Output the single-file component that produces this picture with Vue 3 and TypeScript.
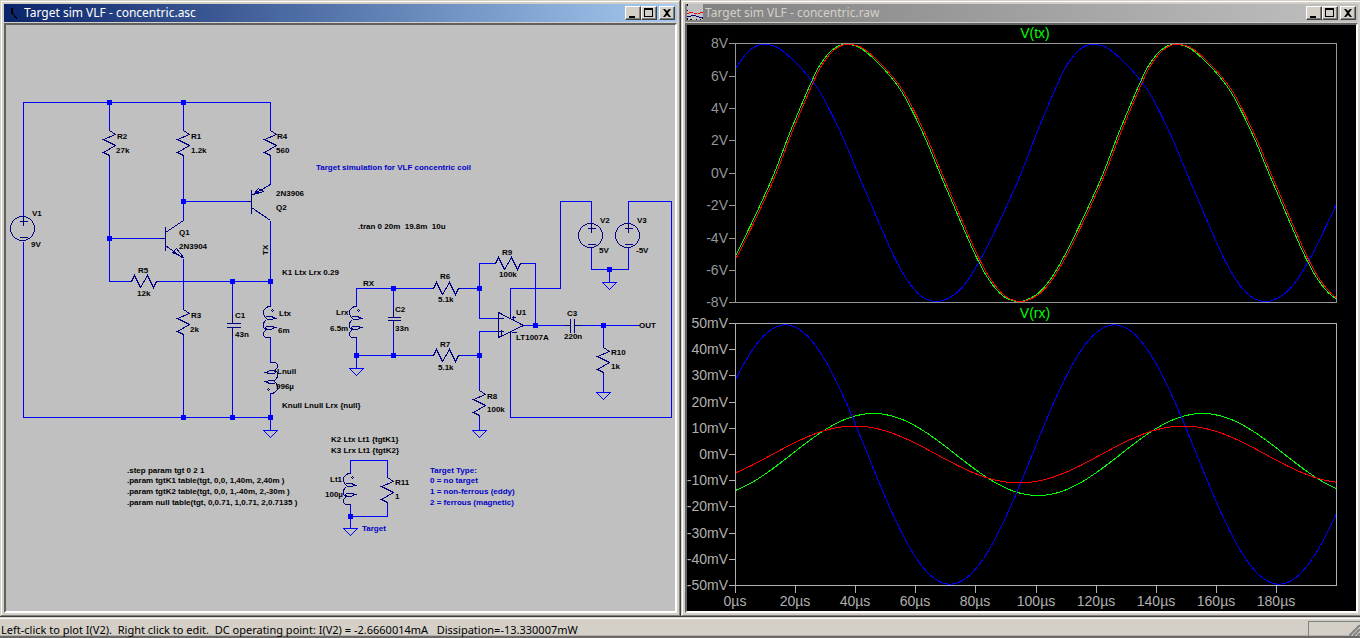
<script setup lang="ts">
type Point = [number, number]
interface Label { x: number; y: number; text: string; note?: boolean }
interface Axis { at: number; text: string }

const wires: string[] = [
  'M23 216V102H270V130', 'M23 241V417H270', 'M109 102V130', 'M109 155V281H131',
  'M183 102V130', 'M183 155V220', 'M183 201H247', 'M109 238H160', 'M156 281H270',
  'M183 258V309', 'M183 334V417', 'M232 281V323', 'M232 327V417', 'M270 155V184',
  'M270 220V306', 'M270 337V362', 'M270 392V430', 'M356 306V288H433', 'M458 288H479',
  'M495 263H479V318H498', 'M520 263H535V325', 'M498 331H479V390', 'M458 355H479',
  'M479 415V430', 'M356 337V368', 'M356 355H433', 'M393 288V317', 'M393 320V355',
  'M510 316V288H560V201H591V223', 'M510 333V417H671V201H628V223', 'M591 247V269H628V247',
  'M609 269V282', 'M523 325H570', 'M575 325H639', 'M603 325V347', 'M603 372V392',
  'M350 473V460H387V477', 'M387 502V516H350', 'M350 504V528',
]
const junctions: Point[] = [
  [109, 102], [183, 102], [183, 201], [109, 238], [232, 281], [270, 281], [183, 417],
  [232, 417], [270, 417], [393, 288], [479, 288], [479, 355], [356, 355], [393, 355],
  [609, 269], [535, 325], [603, 325], [350, 516],
]
const grounds: Point[] = [[270, 430], [356, 368], [479, 430], [609, 282], [603, 392], [350, 528]]
const uprightResistors: Point[] = [[109, 130], [183, 130], [270, 130], [183, 309], [479, 390], [603, 347], [387, 477]]
const flatResistors: Point[] = [[131, 281], [433, 288], [433, 355], [495, 263]]
const sources: Point[] = [[22, 228], [590, 235], [627, 235]]
const coils: string[] = ['translate(270 306)', 'translate(356 306)', 'translate(350 473)', 'translate(270 393) rotate(180)']

const labels: Label[] = [
  { x: 32, y: 216, text: 'V1' }, { x: 31, y: 247, text: '9V' },
  { x: 117, y: 139, text: 'R2' }, { x: 116, y: 153, text: '27k' },
  { x: 191, y: 139, text: 'R1' }, { x: 191, y: 153, text: '1.2k' },
  { x: 277, y: 139, text: 'R4' }, { x: 276, y: 153, text: '560' },
  { x: 276, y: 196, text: '2N3906' }, { x: 276, y: 210, text: 'Q2' },
  { x: 179, y: 235, text: 'Q1' }, { x: 179, y: 249, text: '2N3904' },
  { x: 138, y: 273, text: 'R5' }, { x: 137, y: 296, text: '12k' },
  { x: 191, y: 318, text: 'R3' }, { x: 190, y: 332, text: '2k' },
  { x: 235, y: 318, text: 'C1' }, { x: 235, y: 337, text: '43n' },
  { x: 279, y: 316, text: 'Ltx' }, { x: 278, y: 333, text: '6m' },
  { x: 277, y: 374, text: 'Lnull' }, { x: 276, y: 389, text: '996µ' },
  { x: 282, y: 275, text: 'K1 Ltx Lrx 0.29' }, { x: 282, y: 408, text: 'Knull Lnull Lrx {null}' },
  { x: 316, y: 170, text: 'Target simulation for VLF concentric coil', note: true },
  { x: 358, y: 229, text: '.tran 0 20m  19.8m  10u' },
  { x: 502, y: 255, text: 'R9' }, { x: 499, y: 277, text: '100k' },
  { x: 363, y: 286, text: 'RX' }, { x: 440, y: 279, text: 'R6' }, { x: 438, y: 302, text: '5.1k' },
  { x: 336, y: 315, text: 'Lrx' }, { x: 330, y: 331, text: '6.5m' },
  { x: 395, y: 312, text: 'C2' }, { x: 395, y: 331, text: '33n' },
  { x: 516, y: 315, text: 'U1' }, { x: 516, y: 340, text: 'LT1007A' },
  { x: 567, y: 316, text: 'C3' }, { x: 564, y: 339, text: '220n' },
  { x: 639, y: 328, text: 'OUT' }, { x: 611, y: 355, text: 'R10' }, { x: 611, y: 369, text: '1k' },
  { x: 487, y: 399, text: 'R8' }, { x: 487, y: 412, text: '100k' },
  { x: 440, y: 347, text: 'R7' }, { x: 438, y: 370, text: '5.1k' },
  { x: 600, y: 223, text: 'V2' }, { x: 599, y: 253, text: '5V' },
  { x: 637, y: 223, text: 'V3' }, { x: 636, y: 253, text: '-5V' },
  { x: 331, y: 442, text: 'K2 Ltx Lt1 {tgtK1}' }, { x: 331, y: 453, text: 'K3 Lrx Lt1 {tgtK2}' },
  { x: 330, y: 482, text: 'Lt1' }, { x: 325, y: 497, text: '100µ' },
  { x: 395, y: 485, text: 'R11' }, { x: 395, y: 499, text: '1' },
  { x: 362, y: 531, text: 'Target', note: true },
  { x: 127, y: 473, text: '.step param tgt 0 2 1' },
  { x: 127, y: 483, text: '.param tgtK1 table(tgt, 0,0, 1,40m, 2,40m )' },
  { x: 127, y: 494, text: '.param tgtK2 table(tgt, 0,0, 1,-40m, 2,-30m )' },
  { x: 127, y: 505, text: '.param null table(tgt, 0,0.71, 1,0.71, 2,0.7135 )' },
  { x: 430, y: 473, text: 'Target Type:', note: true },
  { x: 430, y: 483, text: '0 = no target', note: true },
  { x: 430, y: 494, text: '1 = non-ferrous (eddy)', note: true },
  { x: 430, y: 505, text: '2 = ferrous (magnetic)', note: true },
]

const message =
  'Left-click to plot I(V2).  Right click to edit.  DC operating point: I(V2) = -2.6660014mA   Dissipation=-13.330007mW'

const LEFT = 735
const RIGHT = 1336
const PERIOD = 329

const txAxis: Axis[] = [8, 6, 4, 2, 0, -2, -4, -6, -8].map((v) => ({
  at: Math.round(172.7 - v * 16.2), text: `${v}V`,
}))
const rxAxis: Axis[] = [50, 40, 30, 20, 10, 0, -10, -20, -30, -40, -50].map((v) => ({
  at: Math.round(454 - v * 2.62), text: `${v}mV`,
}))
const timeAxis: Axis[] = [0, 20, 40, 60, 80, 100, 120, 140, 160, 180].map((t) => ({
  at: Math.round(LEFT + t * 3.005), text: `${t}µs`,
}))

// One cycle of the coil drive voltage: offset from its crest, height on the plot.
const cycle: Point[] = [
  [-155, 301], [-140, 294], [-127, 280], [-113, 257], [-98, 227], [-88, 206], [-73, 172],
  [-58, 133], [-48, 109], [-39, 88], [-29, 67], [-18, 52], [-8, 45], [0, 44], [12, 47],
  [28, 60], [42, 75], [54, 91], [66, 113], [80, 143], [92, 172], [104, 200], [116, 228],
  [130, 259], [142, 280], [155, 295], [168, 301],
]

function toPath(points: Point[]): string {
  return points.map(([x, y], i) => `${i ? 'L' : 'M'}${x} ${y.toFixed(1)}`).join('')
}

function driveWave(crest: number): string {
  const knots: Point[] = []
  for (let k = -2; k <= 2; k++) {
    for (const [dx, y] of cycle) knots.push([crest + k * PERIOD + dx, y])
  }
  const out: Point[] = []
  let i = 1
  for (let x = LEFT; x <= RIGHT; x++) {
    while (knots[i + 1][0] <= x) i++
    const [p0, p1, p2, p3] = [knots[i - 1], knots[i], knots[i + 1], knots[i + 2]]
    const h = p2[0] - p1[0]
    const t = (x - p1[0]) / h
    const m1 = ((p2[1] - p0[1]) / (p2[0] - p0[0])) * h
    const m2 = ((p3[1] - p1[1]) / (p3[0] - p1[0])) * h
    const y =
      (2 * t ** 3 - 3 * t ** 2 + 1) * p1[1] + (t ** 3 - 2 * t ** 2 + t) * m1 +
      (3 * t ** 2 - 2 * t ** 3) * p2[1] + (t ** 3 - t ** 2) * m2
    out.push([x, y])
  }
  return toPath(out)
}

function sineWave(crest: number, amplitude: number): string {
  const out: Point[] = []
  for (let x = LEFT; x <= RIGHT; x++) {
    out.push([x, 454 - amplitude * Math.cos((2 * Math.PI * (x - crest)) / PERIOD)])
  }
  return toPath(out)
}

const traces = [
  { color: 'lime', d: driveWave(847) },
  { color: 'blue', d: driveWave(765) },
  { color: 'red', d: driveWave(849) },
  { color: 'lime', d: sineWave(873, 41) },
  { color: 'blue', d: sineWave(785, 129.6) },
  { color: 'red', d: sineWave(854, 28.4) },
]
</script>

<template>
  <div class="app">
    <main class="desktop">
      <section class="window" aria-label="Schematic">
        <header class="titlebar active">
          <svg class="icon" viewBox="0 0 16 16" aria-hidden="true">
            <path d="M5 3h2v5h1v2h1v1h1v1h1v2h-1v-1h-1v-1h-1v-2h-1v-1h-2z" fill="#000" />
          </svg>
          <h2 class="title">Target sim VLF - concentric.asc</h2>
          <button class="ctl" type="button" aria-label="Minimize">
            <svg viewBox="0 0 12 10"><path d="M2 8h6v2h-6z" /></svg>
          </button>
          <button class="ctl" type="button" aria-label="Maximize">
            <svg viewBox="0 0 12 10"><path d="M1 0h9v9h-9zM2 2v6h7v-6z" fill-rule="evenodd" /></svg>
          </button>
          <button class="ctl close" type="button" aria-label="Close">
            <svg viewBox="0 0 12 10"><path d="M2 1h2l2 2 2-2h2l-3 4 3 4h-2l-2-2-2 2h-2l3-4z" /></svg>
          </button>
        </header>
        <div class="client">
          <svg class="canvas" viewBox="6 25 669 586" role="img" aria-label="Concentric coil circuit">
            <g class="strokes" transform="translate(.5 .5)">
              <path v-for="d in wires" :key="d" class="wire" :d="d" />
              <path v-for="g in grounds" :key="g.join()" class="wire" :d="`M${g[0] - 7} ${g[1]}h14l-7 7z`" />
              <path
                v-for="r in uprightResistors" :key="r.join()" class="part"
                :d="`M${r[0]} ${r[1] - 2}v2l6 4-12 5 12 6-12 7 6 3v2`"
              />
              <path
                v-for="r in flatResistors" :key="r.join()" class="part"
                :d="`M${r[0] - 2} ${r[1]}h2l3-6 6 12 7-12 6 12 3-6h2`"
              />
              <g v-for="s in sources" :key="s.join()" class="part" :transform="`translate(${s[0]} ${s[1]})`">
                <circle r="12" />
                <path d="M-3-7h8M1-12v9M-3 9h8" />
              </g>
              <g v-for="c in coils" :key="c" class="part" :transform="c">
                <path d="M0 0h-2q-5 2-5 6 0 4 3 6M-7 20v-2q0-3 3-5M-7 20q0 2 3 3-3 2-3 4 0 4 3 4h4" />
                <path d="M-5 11q2-2 6-1l4 2-5 1q-4 0-5-2M-5 21q2-2 6-1l4 1-5 2q-4 0-5-2M2 3l1 1-1 1-1-1z" />
              </g>
              <path class="part" d="M226 323h14M226 327h14M387 317h13M387 320h13M570 318v14M574 318v14M563 325h7M574 325h7" />
              <path class="part" d="M232 313v10M232 327v9M393 309v8M393 320v9" />
              <path class="part" d="M246 201h5M251 189v24M251 195l19-11M251 207l19 13M253 194l5-6 5 3z" />
              <path class="part" d="M160 238h5M165 226v24M165 232l18-12M165 245l18 13M183 257l-11-5 4-4z" />
              <path class="part" d="M498 312v25l25-12zM494 318h9M494 331h9M501 329v5M511 317h4M513 315v4M511 332h5M510 313v5M510 331v6" />
            </g>
            <rect
              v-for="j in junctions" :key="j.join()" class="junction"
              :x="j[0] - 2" :y="j[1] - 2" width="5" height="5"
            />
            <text
              v-for="(l, i) in labels" :key="i" class="label" :class="{ note: l.note }"
              :x="l.x" :y="l.y"
            >{{ l.text }}</text>
            <text class="label" transform="translate(268 255) rotate(-90)">TX</text>
          </svg>
        </div>
      </section>

      <section class="window" aria-label="Waveforms">
        <header class="titlebar">
          <svg class="icon raised" viewBox="0 0 16 16" aria-hidden="true">
            <path d="M0 0h16v16h-16z" fill="#c0c0c0" />
            <path d="M0 0h1v2h-1zM0 6h1v1h-1zM0 14h1v2h-1zM3 15h2v1h-2zM9 15h1v1h-1zM13 15h1v1h-1zM15 13h1v2h-1z" fill="#000" />
            <path d="M0 9h2v1h-2zM2 8h4v1h-4zM7 9h3v1h-3zM11 9h2v1h-2zM13 8h3v1h-3z" fill="#f00" />
            <path d="M0 12h4v1h-4zM4 11h5v1h-5zM9 12h3v1h-3zM12 13h4v1h-4z" fill="#000080" />
          </svg>
          <h2 class="title">Target sim VLF - concentric.raw</h2>
          <button class="ctl" type="button" aria-label="Minimize">
            <svg viewBox="0 0 12 10"><path d="M2 8h6v2h-6z" /></svg>
          </button>
          <button class="ctl" type="button" aria-label="Maximize">
            <svg viewBox="0 0 12 10"><path d="M1 0h9v9h-9zM2 2v6h7v-6z" fill-rule="evenodd" /></svg>
          </button>
          <button class="ctl close" type="button" aria-label="Close">
            <svg viewBox="0 0 12 10"><path d="M2 1h2l2 2 2-2h2l-3 4 3 4h-2l-2-2-2 2h-2l3-4z" /></svg>
          </button>
        </header>
        <div class="client plots">
          <svg class="canvas" viewBox="687 25 669 586" role="img" aria-label="V(tx) and V(rx) against time">
            <g class="strokes" transform="translate(.5 .5)">
              <path v-for="(t, i) in traces" :key="i" :d="t.d" :stroke="t.color" />
              <g class="tx-frame">
                <path d="M735 43H1336V302H735z" />
                <path v-for="a in txAxis" :key="a.text" :d="`M728 ${a.at}h7`" />
              </g>
              <g class="rx-frame">
                <path d="M735 323H1336V585H735z" />
                <path v-for="a in rxAxis" :key="a.text" :d="`M728 ${a.at}h7`" />
                <path v-for="a in timeAxis" :key="a.text" :d="`M${a.at} 585v7`" />
              </g>
            </g>
            <text v-for="a in txAxis" :key="a.text" class="scale tx" x="728" :y="a.at + 5">{{ a.text }}</text>
            <text v-for="a in rxAxis" :key="a.text" class="scale" x="728" :y="a.at + 5">{{ a.text }}</text>
            <text v-for="a in timeAxis" :key="a.text" class="scale time" :x="a.at" y="606">{{ a.text }}</text>
            <text class="scale trace" x="1035" y="38">V(tx)</text>
            <text class="scale trace" x="1035" y="318">V(rx)</text>
          </svg>
        </div>
      </section>
    </main>

    <footer class="statusbar">
      <output class="message">{{ message }}</output>
      <div class="panel">
        <svg class="grip" viewBox="0 0 12 12" aria-hidden="true">
          <path d="M0 12L12 0M4 12L12 4M8 12L12 8" stroke="#fff" />
          <path d="M1 12L12 1M5 12L12 5M9 12L12 9" stroke="#808080" stroke-width="2" />
        </svg>
      </div>
    </footer>
  </div>
</template>

<style>
body {
  margin: 0;
  background: #d4d0c8;
}
</style>

<style scoped>
.app {
  display: flex;
  flex-direction: column;
  min-height: 100vh;
  overflow: hidden;
  background: #d4d0c8;
  font-family: "Noto Sans", "DejaVu Sans", sans-serif;
  font-size: 11px;
}
.desktop {
  display: grid;
  grid-template-columns: 1fr 1fr;
  flex: 1;
  /* the right-hand window hangs over the edge by its outer border */
  margin-right: -2px;
}
.window {
  display: flex;
  flex-direction: column;
  min-width: 0;
  padding: 4px;
  box-shadow:
    inset -1px -1px #404040,
    inset 1px 1px #d4d0c8,
    inset -2px -2px #808080,
    inset 2px 2px #fff;
}
.titlebar {
  display: flex;
  align-items: center;
  height: 18px;
  margin-bottom: 1px;
  padding: 0 2px;
  background: linear-gradient(90deg, #808080, #c0c0c0);
  color: #d4d0c8;
}
.titlebar.active {
  background: linear-gradient(90deg, #0a246a, #a6caf0);
  color: #fff;
}
.icon {
  flex: none;
  width: 16px;
  height: 16px;
  margin-right: 2px;
}
.icon.raised {
  align-self: flex-start;
}
.title {
  flex: 1;
  margin: 0;
  overflow: hidden;
  font-size: 12px;
  font-weight: 400;
  line-height: 18px;
  white-space: pre;
}
.ctl {
  box-sizing: border-box;
  flex: none;
  width: 16px;
  height: 14px;
  padding: 1px;
  border: 1px solid;
  border-color: #fff #404040 #404040 #fff;
  background: #d4d0c8;
  box-shadow: inset -1px -1px #808080;
}
.ctl.close {
  margin-left: 2px;
}
.ctl svg {
  display: block;
  width: 12px;
  height: 10px;
}
.client {
  flex: 1;
  border: 2px solid;
  border-color: #606060 #fff #fff #606060;
  background: #c0c0c0;
}
.plots {
  background: #000;
}
.canvas {
  display: block;
  width: 100%;
  height: auto;
}
.strokes {
  fill: none;
  stroke-width: 1px;
  shape-rendering: crispEdges;
}
.wire {
  stroke: #00f;
}
.part {
  stroke: #000080;
}
.junction {
  fill: #00f;
}
.label {
  fill: #000;
  font: 700 8px "Liberation Sans", Arial, sans-serif;
  white-space: pre;
}
.label.note {
  fill: #0000c8;
}
.tx-frame {
  stroke: #969696;
}
.rx-frame {
  stroke: #b0b0b0;
}
.scale {
  fill: #b0b0b0;
  font: 400 14px "Liberation Sans", Arial, sans-serif;
  text-anchor: end;
}
.scale.tx {
  fill: #969696;
}
.scale.time {
  text-anchor: middle;
}
.scale.trace {
  fill: #0f0;
  text-anchor: middle;
}
.statusbar {
  display: flex;
  box-sizing: border-box;
  height: 21px;
  border-bottom: 2px solid #6c6868;
  padding: 4px 0 0 1px;
  box-shadow: inset 0 1px #d4d0c8, inset 0 2px #fff, inset 0 -1px #b4b0ac;
}
.message {
  flex: 1;
  color: #000;
  line-height: 17px;
  white-space: pre;
}
.panel {
  display: flex;
  align-items: flex-end;
  justify-content: flex-end;
  box-sizing: border-box;
  width: 52px;
  border-top: 1px solid #808080;
  border-left: 1px solid #808080;
}
.grip {
  width: 12px;
  height: 12px;
}
</style>
